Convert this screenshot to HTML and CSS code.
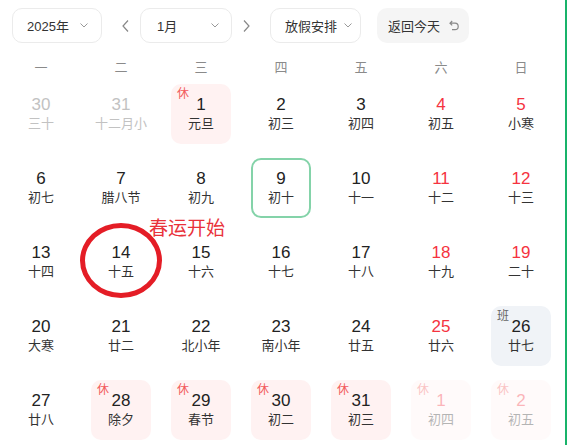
FILE: index.html
```html
<!DOCTYPE html>
<html lang="zh">
<head>
<meta charset="utf-8">
<link rel="stylesheet" href="styles.css">
</head>
<body>
<div class="page">
  <div class="toolbar">
    <div class="select year">2025年<svg class="chev" width="8" height="5" viewBox="0 0 8 5"><path d="M0.5 0.5 L4 4 L7.5 0.5" fill="none" stroke="#999" stroke-width="1"/></svg></div>
    <div class="arrow prev"><svg width="7" height="12" viewBox="0 0 7 12"><path d="M6 0.5 L1 6 L6 11.5" fill="none" stroke="#888" stroke-width="1.2"/></svg></div>
    <div class="select month">1月<svg class="chev" width="8" height="5" viewBox="0 0 8 5"><path d="M0.5 0.5 L4 4 L7.5 0.5" fill="none" stroke="#999" stroke-width="1"/></svg></div>
    <div class="arrow next"><svg width="7" height="12" viewBox="0 0 7 12"><path d="M1 0.5 L6 6 L1 11.5" fill="none" stroke="#888" stroke-width="1.2"/></svg></div>
    <div class="select holiday">放假安排<svg class="chev" width="8" height="5" viewBox="0 0 8 5"><path d="M0.5 0.5 L4 4 L7.5 0.5" fill="none" stroke="#999" stroke-width="1"/></svg></div>
    <div class="today-btn">返回今天<svg class="back" width="10" height="11" viewBox="0 0 10 11"><path d="M3.2 1 L1 3.2 L3.2 5.4 M1 3.2 H6 A3 3 0 0 1 6 9.6 H3" fill="none" stroke="#888" stroke-width="1.2"/></svg></div>
  </div>

  <div class="weekdays">
    <span>一</span><span>二</span><span>三</span><span>四</span><span>五</span><span>六</span><span>日</span>
  </div>

  <div class="days">
    <div class="day other"><span class="num">30</span><span class="lunar">三十</span></div>
    <div class="day other"><span class="num">31</span><span class="lunar">十二月小</span></div>
    <div class="day rest"><i class="tag">休</i><span class="num">1</span><span class="lunar">元旦</span></div>
    <div class="day"><span class="num">2</span><span class="lunar">初三</span></div>
    <div class="day"><span class="num">3</span><span class="lunar">初四</span></div>
    <div class="day"><span class="num red">4</span><span class="lunar">初五</span></div>
    <div class="day"><span class="num red">5</span><span class="lunar">小寒</span></div>

    <div class="day"><span class="num">6</span><span class="lunar">初七</span></div>
    <div class="day"><span class="num">7</span><span class="lunar">腊八节</span></div>
    <div class="day"><span class="num">8</span><span class="lunar">初九</span></div>
    <div class="day today"><span class="num">9</span><span class="lunar">初十</span></div>
    <div class="day"><span class="num">10</span><span class="lunar">十一</span></div>
    <div class="day"><span class="num red">11</span><span class="lunar">十二</span></div>
    <div class="day"><span class="num red">12</span><span class="lunar">十三</span></div>

    <div class="day"><span class="num">13</span><span class="lunar">十四</span></div>
    <div class="day"><span class="num">14</span><span class="lunar">十五</span></div>
    <div class="day"><span class="num">15</span><span class="lunar">十六</span></div>
    <div class="day"><span class="num">16</span><span class="lunar">十七</span></div>
    <div class="day"><span class="num">17</span><span class="lunar">十八</span></div>
    <div class="day"><span class="num red">18</span><span class="lunar">十九</span></div>
    <div class="day"><span class="num red">19</span><span class="lunar">二十</span></div>

    <div class="day"><span class="num">20</span><span class="lunar">大寒</span></div>
    <div class="day"><span class="num">21</span><span class="lunar">廿二</span></div>
    <div class="day"><span class="num">22</span><span class="lunar">北小年</span></div>
    <div class="day"><span class="num">23</span><span class="lunar">南小年</span></div>
    <div class="day"><span class="num">24</span><span class="lunar">廿五</span></div>
    <div class="day"><span class="num red">25</span><span class="lunar">廿六</span></div>
    <div class="day work"><i class="tag">班</i><span class="num">26</span><span class="lunar">廿七</span></div>

    <div class="day"><span class="num">27</span><span class="lunar">廿八</span></div>
    <div class="day rest"><i class="tag">休</i><span class="num">28</span><span class="lunar">除夕</span></div>
    <div class="day rest"><i class="tag">休</i><span class="num">29</span><span class="lunar">春节</span></div>
    <div class="day rest"><i class="tag">休</i><span class="num">30</span><span class="lunar">初二</span></div>
    <div class="day rest"><i class="tag">休</i><span class="num">31</span><span class="lunar">初三</span></div>
    <div class="day rest faded"><i class="tag">休</i><span class="num red">1</span><span class="lunar">初四</span></div>
    <div class="day rest faded"><i class="tag">休</i><span class="num red">2</span><span class="lunar">初五</span></div>
  </div>

  <div class="mark-circle"></div>
  <div class="mark-text">春运开始</div>
</div>
</body>
</html>
```

FILE: styles.css
```css
html, body {
  margin: 0;
  padding: 0;
  background: #fff;
}

body {
  font-family: "Liberation Sans", "Noto Sans CJK SC", sans-serif;
  color: #222;
}

.page {
  position: relative;
  width: 565px;
  height: 445px;
  border-right: 2px solid #18b36a;
  overflow: hidden;
}

.toolbar {
  display: flex;
  align-items: center;
  padding: 8px 0 0 12px;
  height: 35px;
}

.select {
  box-sizing: border-box;
  height: 35px;
  border: 1px solid #ebebeb;
  border-radius: 10px;
  display: flex;
  align-items: center;
  justify-content: space-between;
  font-size: 13px;
  color: #333;
}

.year {
  width: 90px;
  padding: 0 13px 0 14px;
}

.month {
  width: 92px;
  margin-left: 4px;
  padding: 0 12px 0 16px;
}

.holiday {
  width: 91px;
  margin-left: 13px;
  padding: 0 8px 0 14px;
}

.arrow {
  width: 22px;
  height: 35px;
  display: flex;
  align-items: center;
  justify-content: center;
}

.prev {
  margin-left: 12px;
}

.next {
  margin-left: 3px;
}

.today-btn {
  box-sizing: border-box;
  width: 92px;
  height: 35px;
  margin-left: 16px;
  padding-left: 11px;
  border-radius: 10px;
  background: #f5f5f5;
  display: flex;
  align-items: center;
  font-size: 13px;
  color: #333;
}

.back {
  margin-left: 9px;
}

.weekdays {
  display: grid;
  grid-template-columns: repeat(7, 80px);
  padding-left: 1px;
  margin-top: 9px;
  height: 28px;
  align-items: center;
  font-size: 13px;
  color: #8a8a8a;
  text-align: center;
}

.days {
  display: grid;
  grid-template-columns: repeat(7, 80px);
  grid-auto-rows: 60px;
  row-gap: 14px;
  padding: 4px 0 0 1px;
}

.day {
  position: relative;
  box-sizing: border-box;
  width: 60px;
  height: 60px;
  justify-self: center;
  border-radius: 10px;
  display: flex;
  flex-direction: column;
  align-items: center;
  justify-content: center;
}

.num {
  font-size: 17px;
  line-height: 20px;
  color: #222;
}

.lunar {
  font-size: 13px;
  line-height: 18px;
  color: #333;
  white-space: nowrap;
}

.num.red {
  color: #f5333f;
}

.other .num,
.other .lunar {
  color: #c2c2c2;
}

.rest {
  background: #fff2f2;
}

.work {
  background: #f0f3f7;
}

.tag {
  position: absolute;
  top: 3px;
  left: 6px;
  font-style: normal;
  font-size: 12px;
  line-height: 14px;
  color: #f25a5a;
}

.work .tag {
  color: #666;
}

.today {
  border: 2px solid #84d3a9;
}

.faded {
  opacity: 0.36;
}

.mark-circle {
  position: absolute;
  left: 80px;
  top: 223px;
  width: 82px;
  height: 75px;
  box-sizing: border-box;
  border: 5px solid #e41d26;
  border-radius: 50%;
}

.mark-text {
  position: absolute;
  left: 149px;
  top: 215px;
  font-family: "Noto Sans CJK SC", sans-serif;
  font-size: 19px;
  line-height: 24px;
  color: #e9323a;
  white-space: nowrap;
}
```
